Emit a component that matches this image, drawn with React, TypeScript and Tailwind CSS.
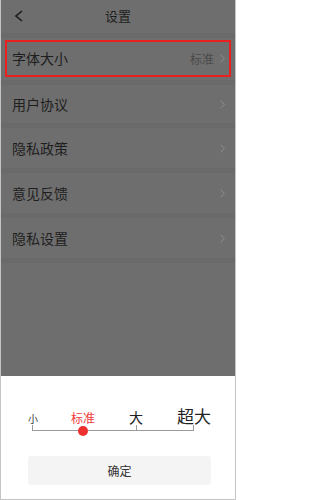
import React from 'react';

const rows = [
  { label: '用户协议', h: 'h-[38px]' },
  { label: '隐私政策', h: 'h-[40px]' },
  { label: '意见反馈', h: 'h-[40px]' },
  { label: '隐私设置', h: 'h-[40px]' },
];

const levels = [
  { label: '小', x: 32, size: 'text-[10px]', color: 'text-[#333]' },
  { label: '标准', x: 82, size: 'text-[12px]', color: 'text-[#f03a3a]' },
  { label: '大', x: 135, size: 'text-[14px]', color: 'text-[#222]' },
  { label: '超大', x: 193, size: 'text-[17px]', color: 'text-[#222]' },
];

function Chevron() {
  return (
    <svg width="5" height="9" viewBox="0 0 5 9" fill="none">
      <polyline points="0.6,0.6 4.3,4.5 0.6,8.4" stroke="#8e8e8e" strokeWidth="1" />
    </svg>
  );
}

export default function App() {
  return (
    <div
      className="w-[236px] h-[500px] flex flex-col border-x border-b border-[#c4c4c4] overflow-hidden"
      style={{ fontFamily: '"Noto Sans CJK SC", "Noto Sans", sans-serif' }}
    >
      {/* dimmed settings page */}
      <div className="flex-1 flex flex-col bg-[#6e6e6e]">
        <div className="h-[33px] relative flex items-center justify-center">
          <svg className="absolute left-[13px] top-[10px]" width="10" height="12" viewBox="0 0 10 12" fill="none">
            <polyline points="8,1 2,6 8,11" stroke="#1a1a1a" strokeWidth="1.6" />
          </svg>
          <span className="text-[13px] text-[#1e1e1e] -mt-px">设置</span>
        </div>
        <div className="h-[5px] bg-[#6a6a6a]" />
        <div className="h-[42px] px-[4px] pt-[2px] pb-[3px] flex">
          <div className="flex-1 border-2 border-[#e8201f] flex items-center justify-between pl-[5px] pr-[4px]">
            <span className="text-[14px] text-[#1e1e1e]">字体大小</span>
            <div className="flex items-center gap-[6px]">
              <span className="text-[12px] text-[#4a4a4a]">标准</span>
              <Chevron />
            </div>
          </div>
        </div>
        {rows.map((r) => (
          <div key={r.label}>
            <div className="h-[5px] bg-[#6a6a6a]" />
            <div className={`${r.h} flex items-center justify-between pl-[11px] pr-[10px]`}>
              <span className="text-[14px] text-[#1e1e1e]">{r.label}</span>
              <Chevron />
            </div>
          </div>
        ))}
        <div className="h-[5px] bg-[#6a6a6a]" />
      </div>

      {/* bottom sheet */}
      <div className="h-[123px] bg-white flex flex-col">
        <div className="relative h-[70px]">
          <div className="absolute top-[54px] left-[31px] w-[162px] h-px bg-[#9a9a9a]" />
          <div className="absolute top-[49px] left-[31px] w-px h-[6px] bg-[#9a9a9a]" />
          <div className="absolute top-[49px] left-[135px] w-px h-[6px] bg-[#9a9a9a]" />
          <div className="absolute top-[49px] left-[192px] w-px h-[6px] bg-[#9a9a9a]" />
          <div className="absolute top-[50px] left-[77px] w-[10px] h-[10px] rounded-full bg-[#ee3030]" />
          {levels.map((l) => (
            <span
              key={l.label}
              className={`absolute bottom-[22px] -translate-x-1/2 leading-none ${l.size} ${l.color}`}
              style={{ left: l.x }}
            >
              {l.label}
            </span>
          ))}
        </div>
        <button className="mt-[10px] ml-[27px] w-[183px] h-[29px] bg-[#f4f4f4] rounded-[3px] text-[12px] text-[#333]">
          确定
        </button>
      </div>
    </div>
  );
}
